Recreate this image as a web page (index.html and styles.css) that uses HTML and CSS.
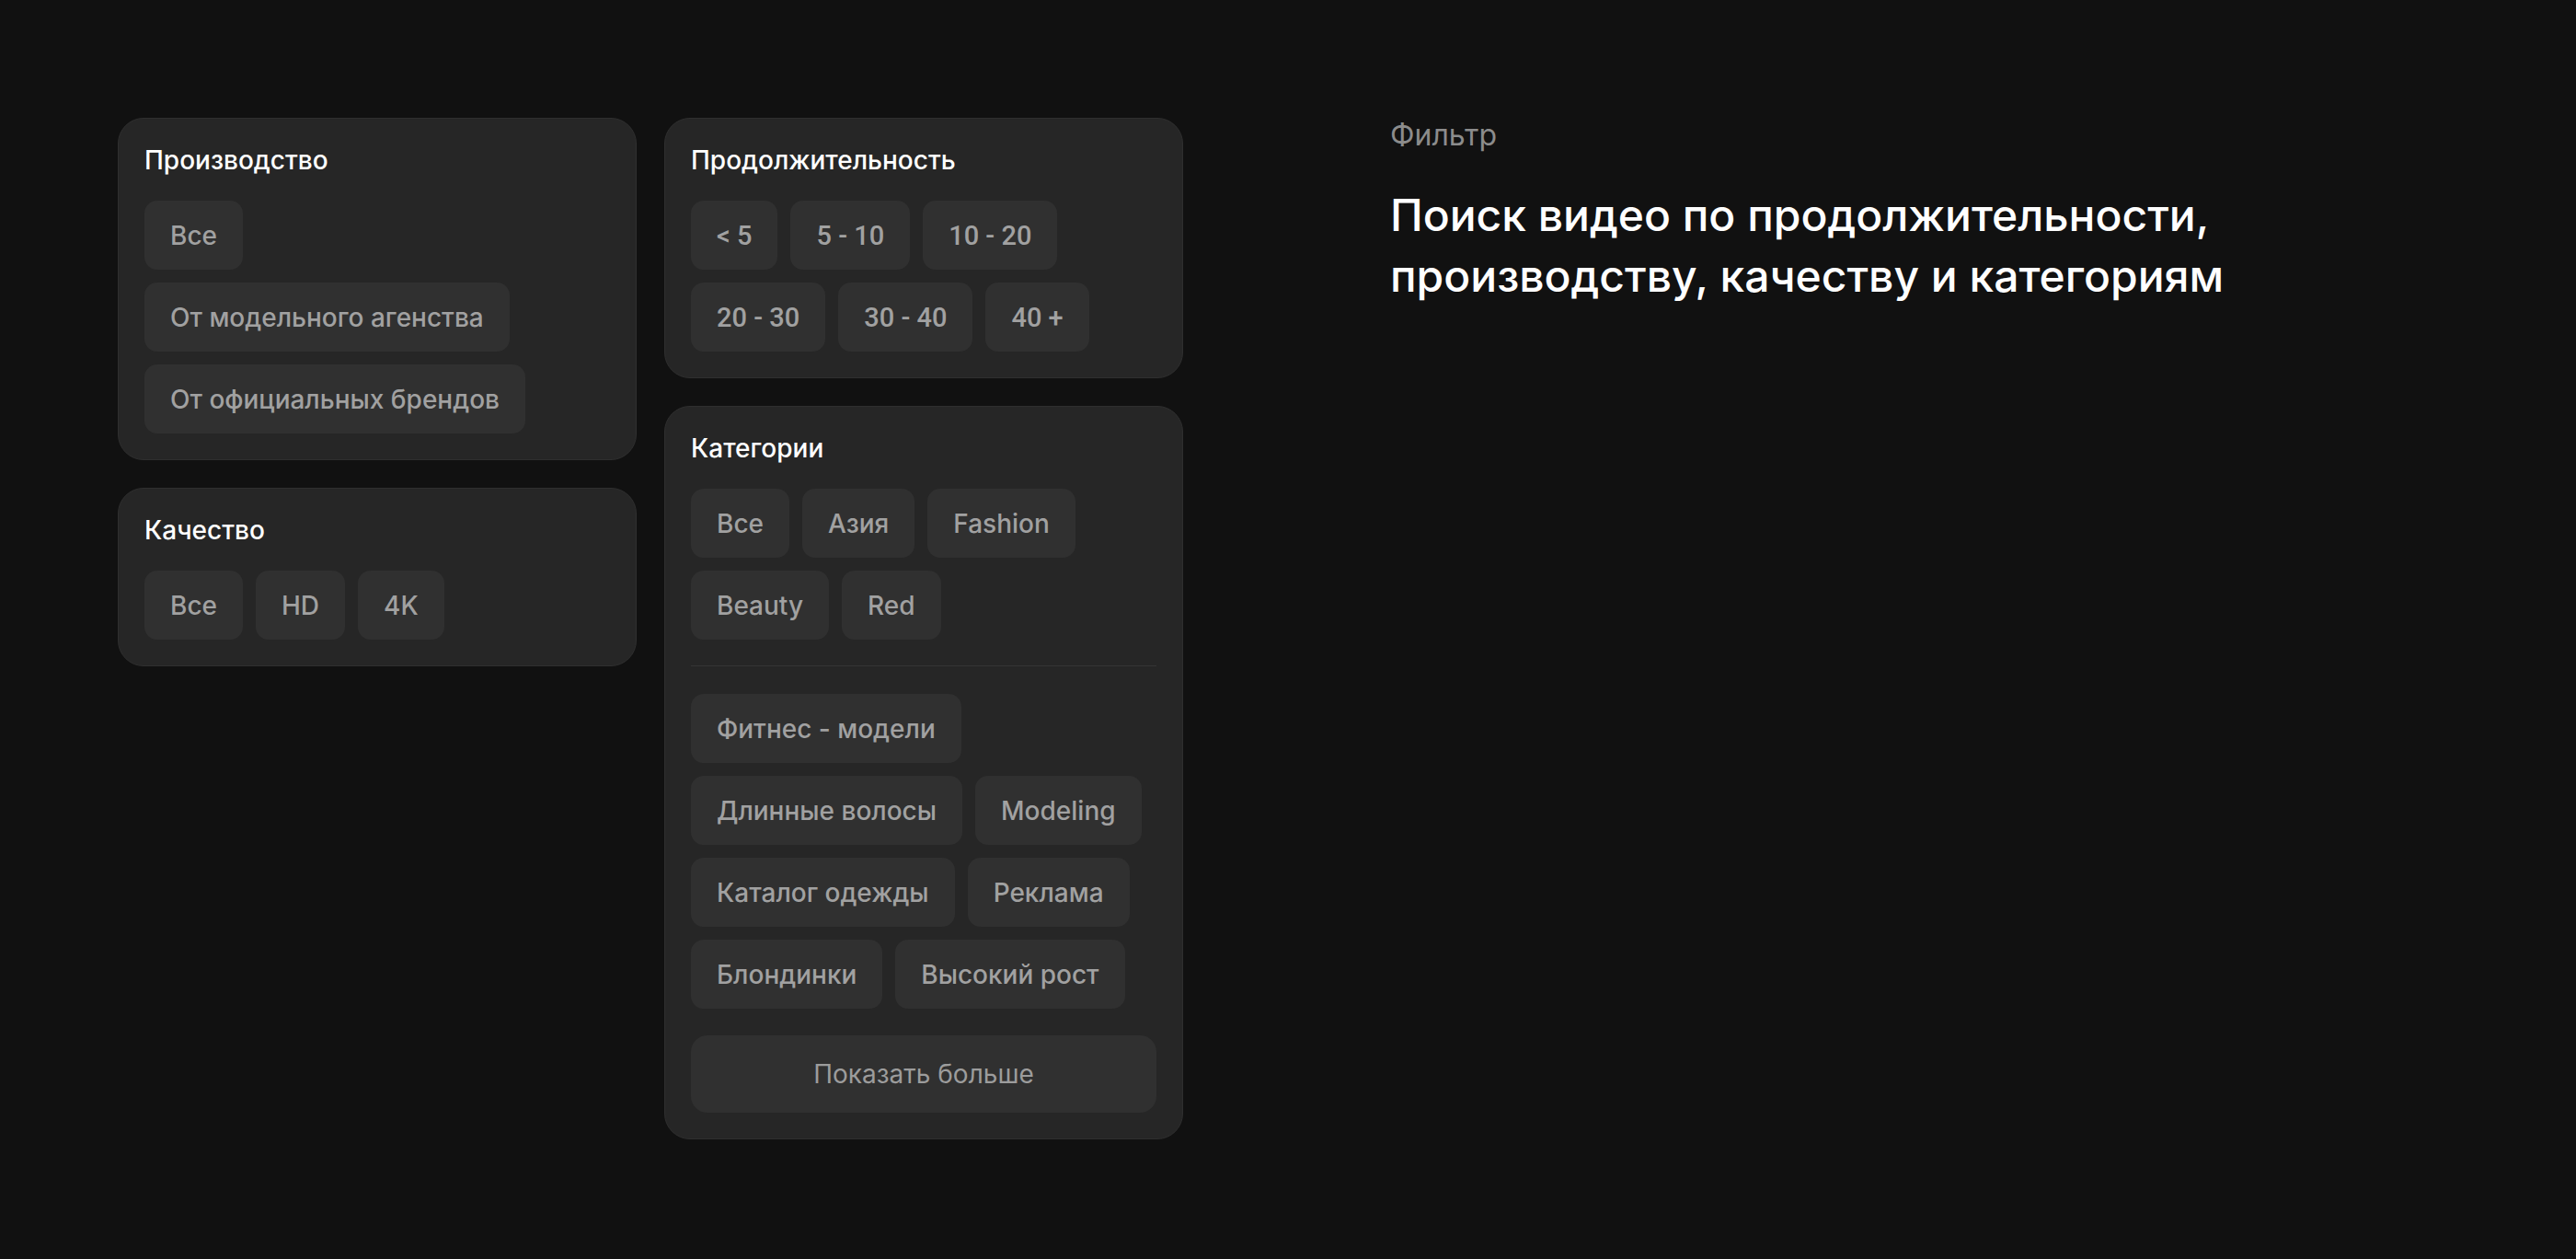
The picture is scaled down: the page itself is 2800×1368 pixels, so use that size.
FILE: index.html
```html
<!DOCTYPE html>
<html lang="ru">
<head>
  <meta charset="UTF-8">
  <meta name="viewport" content="width=device-width, initial-scale=1.0">
  <title>Фильтр</title>
  <link rel="stylesheet" href="styles.css">
</head>
<body>
  <div class="page">
    <div class="filters">
      <div class="column">
        <div class="card">
          <h3>Производство</h3>
          <div class="chips">
            <button class="chip">Все</button>
            <button class="chip">От модельного агенства</button>
            <button class="chip">От официальных брендов</button>
          </div>
        </div>
        <div class="card">
          <h3>Качество</h3>
          <div class="chips">
            <button class="chip">Все</button>
            <button class="chip">HD</button>
            <button class="chip">4K</button>
          </div>
        </div>
      </div>

      <div class="column">
        <div class="card">
          <h3>Продолжительность</h3>
          <div class="chips">
            <button class="chip num">&lt; 5</button>
            <button class="chip num">5 - 10</button>
            <button class="chip num">10 - 20</button>
            <button class="chip num">20 - 30</button>
            <button class="chip num">30 - 40</button>
            <button class="chip num">40 +</button>
          </div>
        </div>
        <div class="card">
          <h3>Категории</h3>
          <div class="chips">
            <button class="chip">Все</button>
            <button class="chip">Азия</button>
            <button class="chip">Fashion</button>
            <button class="chip">Beauty</button>
            <button class="chip">Red</button>
          </div>
          <hr class="divider">
          <div class="chips">
            <button class="chip">Фитнес - модели</button>
            <button class="chip">Длинные волосы</button>
            <button class="chip">Modeling</button>
            <button class="chip">Каталог одежды</button>
            <button class="chip">Реклама</button>
            <button class="chip">Блондинки</button>
            <button class="chip">Высокий рост</button>
          </div>
          <button class="more">Показать больше</button>
        </div>
      </div>
    </div>

    <div class="intro">
      <div class="label">Фильтр</div>
      <h1>Поиск видео по продолжительности,<br>производству, качеству и категориям</h1>
    </div>
  </div>
</body>
</html>
```

FILE: styles.css
```css
body {
  margin: 0;
  background: #111111;
  font-family: Inter, "Noto Sans", sans-serif;
  color: #fff;
}

.page {
  display: flex;
  align-items: flex-start;
  gap: 225px;
  padding: 128px 0 0 128px;
}

.filters {
  display: flex;
  align-items: flex-start;
  gap: 30px;
}

.column {
  display: flex;
  flex-direction: column;
  gap: 30px;
  width: 564px;
}

.card {
  box-sizing: border-box;
  background: #262626;
  border: 1px solid #2f2f2f;
  border-radius: 28px;
  padding: 28px;
}

.card h3 {
  margin: 0 0 27px;
  font-size: 28px;
  line-height: 34px;
  font-weight: 500;
  color: #fff;
}

.chips {
  display: flex;
  flex-wrap: wrap;
  gap: 14px;
}

.chip {
  height: 75px;
  padding: 0 28px;
  border: none;
  border-radius: 14px;
  background: #303030;
  color: #a1a1a1;
  font-family: inherit;
  font-size: 28px;
  font-weight: 500;
  cursor: pointer;
}

/* the durations use narrower, even-width digits */
.chip.num {
  font-family: Roboto, Inter, sans-serif;
  font-size: 29px;
}

.divider {
  border: none;
  height: 1px;
  background: #353535;
  margin: 28px 0 30px;
}

.more {
  display: block;
  width: 100%;
  height: 84px;
  margin-top: 29px;
  border: none;
  border-radius: 18px;
  background: #303030;
  color: #9c9c9c;
  font-family: inherit;
  font-size: 28px;
  font-weight: 400;
  cursor: pointer;
}

.intro .label {
  font-size: 32px;
  line-height: 38px;
  color: #8c8c8c;
}

.intro h1 {
  margin: 35px 0 0;
  font-size: 48px;
  line-height: 66px;
  font-weight: 500;
  color: #fff;
}
```
